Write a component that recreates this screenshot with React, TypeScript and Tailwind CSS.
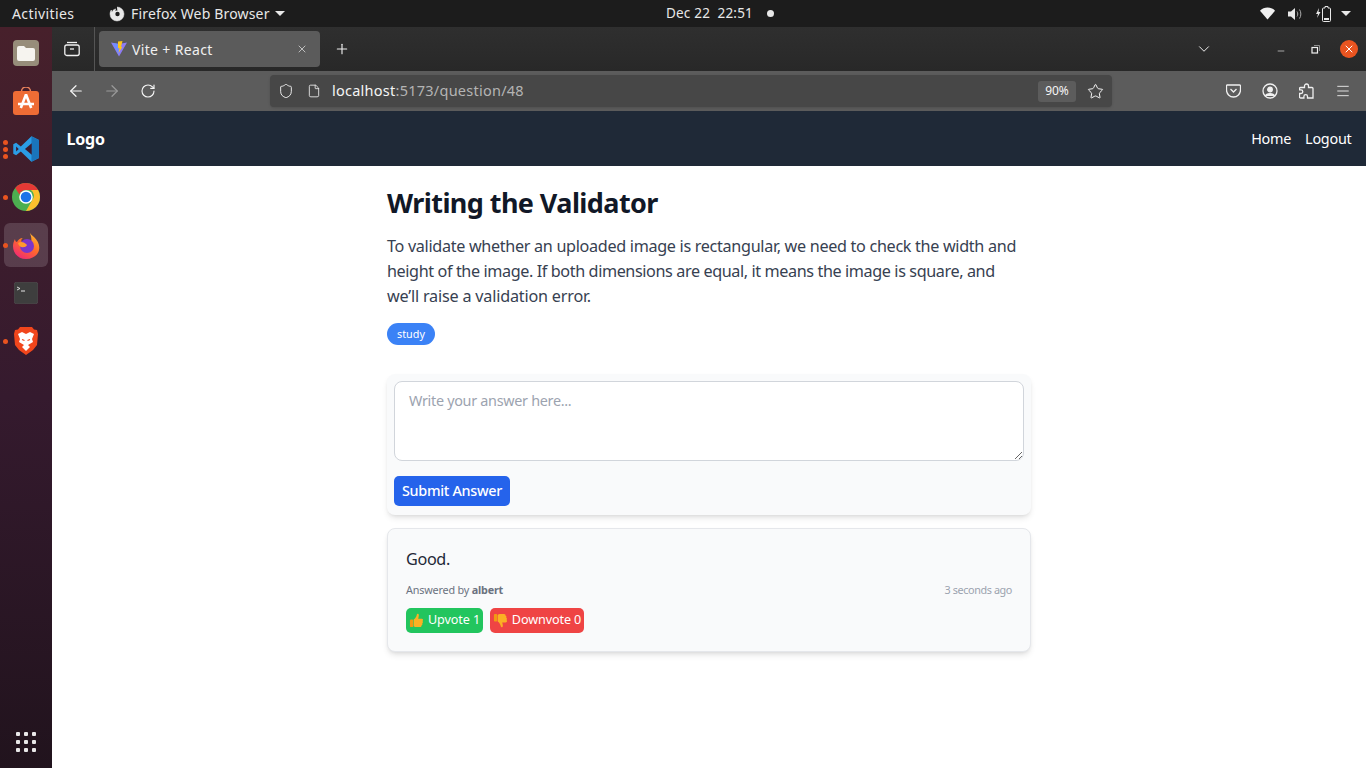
import React from "react";
import { ArrowLeft, ArrowRight, RotateCw, Shield, File, Star, Menu, X, Plus, ChevronDown, Minus } from "lucide-react";

const Dot = ({ className }: { className: string }) => <span className={`absolute w-[5px] h-[5px] rounded-full bg-[#e95420] left-[3px] ${className}`} />;

const DockItem = ({ children, dots = 0, active = false }: { children: React.ReactNode; dots?: number; active?: boolean }) => (
  <div className="relative h-12 w-[52px] flex items-center justify-center">
    {active && <div className="absolute left-1 top-0 w-11 h-11 mt-[2px] rounded-md bg-white/15" />}
    {dots === 1 && <Dot className="top-[22px]" />}
    {dots === 3 && (
      <>
        <Dot className="top-[15px]" />
        <Dot className="top-[22px]" />
        <Dot className="top-[29px]" />
      </>
    )}
    <div className="relative">{children}</div>
  </div>
);

const Files = () => (
  <svg width="26" height="26" viewBox="0 0 26 26">
    <rect width="26" height="26" rx="4" fill="#978d7a" />
    <path d="M4 8a2 2 0 0 1 2-2h5l2 2h7a2 2 0 0 1 2 2v9a2 2 0 0 1-2 2H6a2 2 0 0 1-2-2z" fill="#f6f4ef" />
  </svg>
);
const AppCenter = () => (
  <svg width="26" height="28" viewBox="0 0 26 28">
    <path d="M8.500 7V4.500a4.500 4.500 0 0 1 9 0V7" fill="none" stroke="#e8835c" strokeWidth="1.500" />
    <rect y="4" width="26" height="24" rx="3" fill="#ee6c35" />
    <path d="M13 7.500 7.800 21M13 7.500 18.200 21M5 17h16" stroke="#fff" strokeWidth="2.600" fill="none" />
  </svg>
);
const VSCode = () => (
  <svg width="26" height="26" viewBox="0 0 100 100">
    <path d="M71 99 100 85V15L71 1 30 40 12 26 1 32v36l11 6 18-14z" fill="#2b9de6" />
    <path d="M71 1 100 15v70L71 99z" fill="#1a75bb" />
    <path d="M72 28 46 50l26 22z" fill="#3a1a2e" />
    <path d="M12 40 22 50 12 60z" fill="#3a1a2e" />
  </svg>
);
const Chrome = () => (
  <svg width="28" height="28" viewBox="0 0 28 28">
    <circle cx="14" cy="14" r="14" fill="#4caf50" />
    <path d="M14 0a14 14 0 0 1 12.100 7H14a7 7 0 0 0-6.600 4.600L3.200 5A14 14 0 0 1 14 0z" fill="#e53935" />
    <path d="M26.100 7A14 14 0 0 1 14 28l6-10.500A7 7 0 0 0 19 7z" fill="#fbc02d" />
    <circle cx="14" cy="14" r="6.800" fill="#fff" />
    <circle cx="14" cy="14" r="5.300" fill="#1a73e8" />
  </svg>
);
const Firefox = () => (
  <svg width="28" height="28" viewBox="0 0 28 28">
    <defs>
      <linearGradient id="ff" x1="0.8" y1="0" x2="0.2" y2="1">
        <stop offset="0" stopColor="#ffc22e" />
        <stop offset="0.5" stopColor="#ff6a2b" />
        <stop offset="1" stopColor="#f0247a" />
      </linearGradient>
    </defs>
    <path d="M17 0c1 3 3 4 5 6 4 4 6 8 5 13-1 5-6 9-13 9C6 28 1 22 1 15c0-3 1-5 2-7 0 2 1 3 2 3 1-2 3-4 6-4-2 1-2 3-1 4 3-1 7-1 9 1 1-4 0-8-2-12z" fill="url(#ff)" />
    <circle cx="15" cy="15" r="7" fill="#7b35c9" />
    <path d="M6 12c3-2 6-1 8 1 2 1 0 3-2 3-2 1-5 0-6-4z" fill="#ff9a2e" />
  </svg>
);
const Terminal = () => (
  <svg width="24" height="22" viewBox="0 0 24 22">
    <rect x="0.250" y="0.250" width="23.500" height="21.500" rx="2" fill="#3e3e3e" stroke="#5a5a5a" strokeWidth="0.500" />
    <path d="M3 5l3 1.500L3 8" stroke="#e5e5e5" strokeWidth="0.900" fill="none" />
    <path d="M7 9h4" stroke="#e5e5e5" strokeWidth="1" />
  </svg>
);
const Brave = () => (
  <svg width="24" height="28" viewBox="0 0 24 28">
    <path d="M6 0h12l2 2.500 3 .5 1 4-1 11-4 5-7 5-7-5-4-5L0 7l1-4 3-.5z" fill="#f1461c" />
    <path d="M12 7 8 5 4 7l2 5-1 3 5 3-2 2 4 4 4-4-2-2 5-3-1-3 2-5-4-2z" fill="#fff" />
    <path d="M8 12.500l2.500 1M16 12.500l-2.500 1" stroke="#f1461c" strokeWidth="1.200" />
  </svg>
);
const Vite = () => (
  <svg width="16" height="16" viewBox="0 0 16 16">
    <path d="M0 1.500 8 3l8-1.500L8 15.500z" fill="#8d7bf5" />
    <path d="M1.500 2 8 3v11z" fill="#6f8dff" />
    <path d="M7 0.500 11.500 0 10 6l1.500-.3L7.500 12l1-5-1.500.3z" fill="#ffc517" />
  </svg>
);

const Thumb = ({ down = false }: { down?: boolean }) => (
  <svg width="15" height="15" viewBox="0 0 16 16" className={down ? "rotate-180 -scale-x-100" : ""}>
    <path d="M5 7c1.500-1 3-3 3.400-5.500C8.600 0.500 10.500 0.500 10.500 2.500c0 1.300-.4 2.300-.7 3.500h3.700c1.800 0 1.900 2 .8 2.500.9.600.7 2-.2 2.400.5.800.2 1.900-.7 2.200.2 1-.5 1.900-1.600 1.900H8c-1.300 0-2.200-.5-3-1z" fill="#fbb124" />
    <rect x="1" y="7" width="3.500" height="8" rx="1" fill="#f19a12" />
  </svg>
);

export default function App() {
  return (
    <div className="w-[1366px] h-[768px] overflow-hidden flex flex-col bg-white font-['Noto_Sans',sans-serif]">
      {/* GNOME top bar */}
      <header className="h-[27px] shrink-0 bg-[#1c1c1c] text-[#e8e8e8] text-[14px] relative flex items-center justify-between pl-3 pr-[15px]">
        <div className="flex items-center">
          <span className="w-[97px] tracking-[0.4px]">Activities</span>
          <svg width="16" height="16" viewBox="0 0 16 16" className="mr-[6px]">
            <path d="M8 1a7 7 0 1 1-7 7c0-1.500.5-3 1.300-4 0 1 .5 1.500 1 1.700C3.800 4 5.500 3 7 3 6 3.700 6 4.500 6.300 5c2-.6 4.500.6 4.500 3 0 1.800-1.300 3-3 3-1.500 0-2.500-1-3-2 .5 1 2 2 4 1.500" fill="#e8e8e8" stroke="#e8e8e8" strokeWidth="0.500" />
            <circle cx="8.500" cy="8" r="2.200" fill="#1c1c1c" />
          </svg>
          <span className="tracking-[0.17px]">Firefox Web Browser</span>
          <span className="ml-[5px] w-0 h-0 border-x-[5px] border-x-transparent border-t-[5px] border-t-[#e8e8e8]" />
        </div>
        <div className="absolute left-[666px] top-0 h-full flex items-center text-[13.500px]">
          <span className="w-[101px] tracking-[0.2px] whitespace-nowrap">Dec 22&nbsp;&nbsp;22:51</span>
          <span className="w-[7px] h-[7px] rounded-full bg-[#e8e8e8]" />
        </div>
        <div className="flex items-center">
          <svg width="15" height="13" viewBox="0 0 16 13" className="mr-[13px]"><path d="M0 3.500C4.500-1 11.500-1 16 3.500L8 13z" fill="#f0f0f0" /></svg>
          <svg width="15" height="14" viewBox="0 0 15 14" className="mr-[13px]">
            <path d="M0 4.500h3L7 1v12L3 9.500H0z" fill="#e8e8e8" />
            <path d="M9 4.500c1 1.500 1 3.500 0 5M11.500 2.500c1.800 2.500 1.800 6.500 0 9" stroke="#aaa" strokeWidth="1" fill="none" />
          </svg>
          <svg width="15" height="16" viewBox="0 0 15 16" className="mr-[10px]">
            <path d="M3 2 0 8h2L1 12l3.500-6h-2z" fill="#e8e8e8" />
            <path d="M9 0.500h3V2h1.500a1 1 0 0 1 1 1v11.500a1 1 0 0 1-1 1H7.500a1 1 0 0 1-1-1V3a1 1 0 0 1 1-1H9z" fill="none" stroke="#e8e8e8" strokeWidth="1" />
            <rect x="8" y="12" width="5" height="2" fill="#e8e8e8" />
          </svg>
          <span className="w-0 h-0 border-x-[5px] border-x-transparent border-t-[5px] border-t-[#e8e8e8]" />
        </div>
      </header>

      <div className="flex-1 flex min-h-0">
        {/* Dock */}
        <aside className="w-[52px] shrink-0 bg-gradient-to-b from-[#47202b] via-[#351a2e] to-[#21131d] flex flex-col pt-[2px] relative">
          <DockItem><Files /></DockItem>
          <DockItem><AppCenter /></DockItem>
          <DockItem dots={3}><VSCode /></DockItem>
          <DockItem dots={1}><Chrome /></DockItem>
          <DockItem dots={1} active><Firefox /></DockItem>
          <DockItem><Terminal /></DockItem>
          <DockItem dots={1}><Brave /></DockItem>
          <div className="mt-auto mb-4 mx-auto grid grid-cols-3 gap-[4px]">
            {Array.from({ length: 9 }).map((_, i) => (
              <span key={i} className="w-[4px] h-[4px] bg-white/90 rounded-[1px]" />
            ))}
          </div>
        </aside>

        {/* Browser */}
        <div className="flex-1 flex flex-col min-w-0">
          {/* Tab strip */}
          <div className="h-11 shrink-0 bg-gradient-to-b from-[#2f2f2f] to-[#282828] flex items-center text-[#f0f0f0]">
            <div className="w-[43px] h-full flex items-center justify-center border-r border-[#555] pr-[2px]">
              <svg width="16" height="16" viewBox="0 0 16 16" fill="none" stroke="#f0f0f0" strokeWidth="1.300">
                <path d="M3 1.500h10" />
                <rect x="0.800" y="4" width="14.400" height="10.500" rx="2" />
                <path d="M6 8h4" />
              </svg>
            </div>
            <div className="ml-1 w-[221px] h-9 rounded bg-[#5b5b5b] flex items-center pl-[12px] pr-[12px] text-[14px]">
              <Vite />
              <span className="ml-[5px] flex-1 tracking-[0.35px]">Vite + React</span>
              <X size={12} strokeWidth={1.500} className="text-[#e0e0e0]" />
            </div>
            <Plus size={16} strokeWidth={1.700} className="ml-[14px]" />
            <div className="flex-1" />
            <ChevronDown size={18} strokeWidth={1.300} className="mr-[63px]" />
            <Minus size={10} strokeWidth={1.500} className="mr-[25px] translate-y-[2px]" />
            <svg width="9" height="9" viewBox="0 0 9 9" fill="none" stroke="#f0f0f0" className="mr-5">
              <rect x="1" y="2.500" width="5.500" height="5.500" strokeWidth="1.200" />
              <path d="M3 .5h5.500V6" stroke="#aaa" strokeWidth="0.800" />
            </svg>
            <div className="w-[18px] h-[18px] rounded-full bg-[#e95420] flex items-center justify-center mr-2">
              <X size={12} strokeWidth={2} className="text-white" />
            </div>
          </div>

          {/* Toolbar */}
          <div className="h-10 shrink-0 bg-[#5c5c5c] flex items-center text-[#f5f5f5]">
            <ArrowLeft size={18} strokeWidth={1.600} className="ml-[15px]" />
            <ArrowRight size={18} strokeWidth={1.600} className="ml-[18px] text-[#9a9a9a]" />
            <RotateCw size={16} strokeWidth={1.700} className="ml-[19px]" />
            <div className="ml-[114px] w-[842px] h-8 bg-[#474747] rounded flex items-center pl-2 pr-2 shadow-sm">
              <Shield size={16} strokeWidth={1.400} />
              <File size={14} strokeWidth={1.400} className="ml-[13px]" />
              <span className="ml-[11px] text-[14.500px] tracking-[0.25px]">
                localhost<span className="text-[#b4b4b4]">:5173/question/48</span>
              </span>
              <div className="flex-1" />
              <span className="w-[38px] h-[21px] rounded-[3px] bg-[#5c5c5c] text-[12px] flex items-center justify-center">90%</span>
              <Star size={17} strokeWidth={1.400} className="ml-[11px]" />
            </div>
            <svg width="15" height="14" viewBox="0 0 15 14" fill="none" stroke="#f0f0f0" strokeWidth="1.300" className="ml-[114px]">
              <path d="M1.500 1h12a1 1 0 0 1 1 1v4a7 7 0 0 1-14 0V2a1 1 0 0 1 .5-1z" />
              <path d="M4.500 5 7.500 8l3-3" />
            </svg>
            <svg width="16" height="16" viewBox="0 0 16 16" fill="none" stroke="#f0f0f0" strokeWidth="1.300" className="ml-[21px]">
              <circle cx="8" cy="8" r="7" />
              <circle cx="8" cy="6.500" r="2.300" fill="#f0f0f0" />
              <path d="M3.500 13c1-3 8-3 9 0" fill="#f0f0f0" />
            </svg>
            <svg width="15" height="16" viewBox="0 0 15 16" fill="none" stroke="#f0f0f0" strokeWidth="1.300" className="ml-[21px]">
              <path d="M5.500 4.500V3a2 2 0 0 1 4 0v1.500h3.500a1 1 0 0 1 1 1V15H8.500v-1.500a1.800 1.800 0 0 0-3.600 0V15H1.500a1 1 0 0 1-1-1v-3.500H2a1.800 1.800 0 0 0 0-3.600H.5V5.500a1 1 0 0 1 1-1z" />
            </svg>
            <Menu size={16} strokeWidth={1.300} className="ml-[21px]" />
          </div>

          {/* Page */}
          <nav className="h-[55px] shrink-0 bg-[#1f2937] flex items-center justify-between pl-[14.500px] pr-[14.500px] text-white">
            <span className="text-[16px] font-bold tracking-[-0.2px]">Logo</span>
            <div className="flex gap-[14px] text-[14.400px] tracking-[-0.25px]">
              <span>Home</span>
              <span>Logout</span>
            </div>
          </nav>

          <main className="flex-1 pl-[335px] pt-5">
            <div className="w-[644px]">
              <h1 className="text-[27px] leading-[34px] font-bold text-[#111827] tracking-[-0.58px]">Writing the Validator</h1>
              <p className="mt-[14px] w-[640px] text-[16.200px] leading-[25.200px] text-[#374151] whitespace-nowrap">
                <span className="block tracking-[-0.32px]">To validate whether an uploaded image is rectangular, we need to check the width and</span>
                <span className="block tracking-[-0.4px]">height of the image. If both dimensions are equal, it means the image is square, and</span>
                <span className="block tracking-[-0.2px]">we’ll raise a validation error.</span>
              </p>
              <div className="mt-[13px] flex">
                <span className="h-[22px] w-12 rounded-full bg-[#3b82f6] text-white text-[10.800px] flex items-center justify-center">study</span>
              </div>

              <section className="mt-[29px] bg-[#f9fafb] rounded-lg shadow-md px-[7px] pt-[7px] h-[141px]">
                <textarea
                  placeholder="Write your answer here..."
                  className="block w-full h-20 rounded-lg border border-[#d1d5db] bg-white px-[14px] py-[9px] text-[14.400px] leading-[20px] placeholder:text-[#9ca3af] outline-none resize-y tracking-[-0.3px]"
                />
                <button className="mt-[15px] h-[30px] w-[116px] rounded-[5px] bg-[#2563eb] text-white text-[14.400px] font-medium tracking-[-0.3px]">Submit Answer</button>
              </section>

              <section className="mt-[13px] h-[124px] bg-[#f9fafb] rounded-lg border border-[#e5e7eb] shadow-md px-[18px] pt-[19px]">
                <p className="text-[16.200px] leading-[22px] text-[#1f2937] tracking-[-0.35px]">Good.</p>
                <div className="mt-[12px] flex items-center justify-between text-[10.800px] leading-[16px]">
                  <span className="text-[#6b7280] tracking-[-0.18px]">Answered by <b className="font-bold">albert</b></span>
                  <span className="text-[#9ca3af] tracking-[-0.38px]">3 seconds ago</span>
                </div>
                <div className="mt-[10px] flex gap-[7px] text-[12.600px] text-white tracking-[-0.1px]">
                  <button className="h-[25px] w-[77px] rounded-[5px] bg-[#22c55e] flex items-center justify-center gap-[4px] whitespace-nowrap"><Thumb />Upvote 1</button>
                  <button className="h-[25px] w-[94px] rounded-[5px] bg-[#ef4444] flex items-center justify-center gap-[4px] whitespace-nowrap"><Thumb down />Downvote 0</button>
                </div>
              </section>
            </div>
          </main>
        </div>
      </div>
    </div>
  );
}
